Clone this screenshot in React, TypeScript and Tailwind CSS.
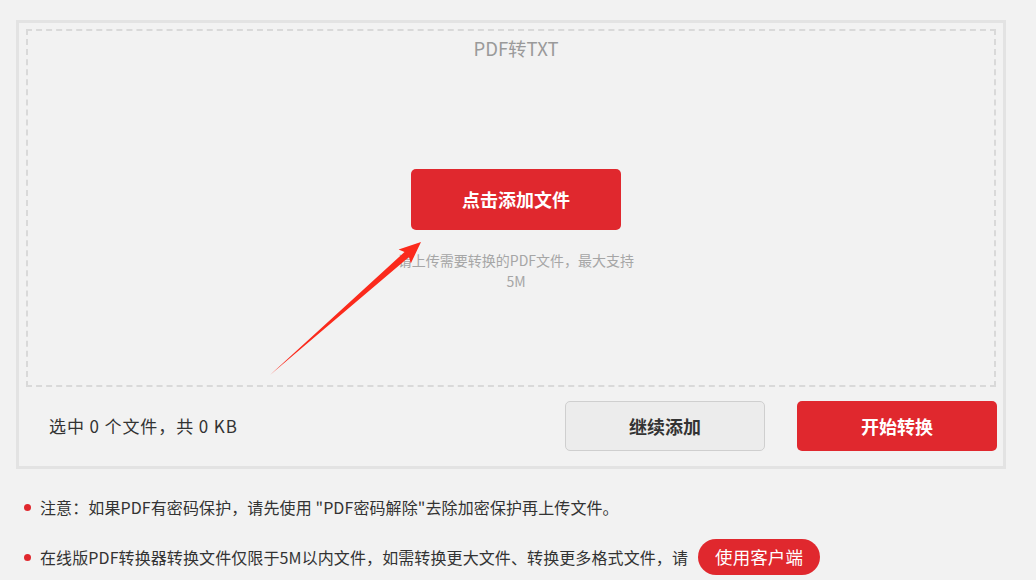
import React from "react";

const font = { fontFamily: '"Noto Sans CJK SC", "Noto Sans", sans-serif' };

export default function App() {
  return (
    <div
      className="relative min-h-[580px] w-[1036px] bg-[#f2f2f2] pt-[20px] pl-[16px] overflow-hidden"
      style={font}
    >
      <div className="w-[990px] border-[3px] border-[#e3e3e3] px-[7px] pt-[6px] pb-[15px]">
        <div className="h-[358px] border-2 border-dashed border-[#d9d9d9] pl-[10px] flex flex-col items-center">
          <div className="mt-[5px] text-[18.5px] leading-[24px] text-[#9a9a9a]">PDF转TXT</div>
          <button className="mt-[109px] w-[210px] h-[61px] rounded-[5px] bg-[#e0282e] text-white text-[18px] font-bold">
            点击添加文件
          </button>
          <div className="mt-[20px] w-[244px] text-center text-[14px] leading-[21px] text-[#a6a6a6]">
            请上传需要转换的PDF文件，最大支持5M
          </div>
        </div>
        <div className="mt-[14px] h-[50px] flex items-center">
          <div className="ml-[23px] text-[17px] tracking-[0.9px] text-[#333]">选中 0 个文件，共 0 KB</div>
          <button className="ml-auto w-[200px] h-[50px] rounded-[5px] border border-[#cfcfcf] bg-[#ececec] text-[18px] font-bold text-[#333]">
            继续添加
          </button>
          <button className="ml-[32px] mr-[-1px] w-[200px] h-[50px] rounded-[5px] bg-[#e0282e] text-[18px] font-bold text-white">
            开始转换
          </button>
        </div>
      </div>
      <ul className="mt-[26px] flex flex-col gap-[26px]">
        <li className="flex items-center h-[24px] text-[16px] tracking-[0.1px] text-[#333]">
          <span className="ml-[8px] mr-[9px] w-[7px] h-[7px] rounded-full bg-[#e0282e]" />
          注意：如果PDF有密码保护，请先使用 "PDF密码解除"去除加密保护再上传文件。
        </li>
        <li className="flex items-center h-[24px] text-[16px] tracking-[0.1px] text-[#333]">
          <span className="ml-[8px] mr-[9px] w-[7px] h-[7px] rounded-full bg-[#e0282e]" />
          在线版PDF转换器转换文件仅限于5M以内文件，如需转换更大文件、转换更多格式文件，请
          <span className="ml-[10px] h-[36px] px-[17px] rounded-full bg-[#e0282e] text-white text-[17.5px] flex items-center">
            使用客户端
          </span>
        </li>
      </ul>
      <svg
        className="absolute left-0 top-0 pointer-events-none"
        width="1036"
        height="580"
        viewBox="0 0 1036 580"
      >
        <polygon
          points="270,375 404.5,252 398.6,249.5 421,242 410.8,263.5 409,257"
          fill="#fb2a1c"
        />
      </svg>
    </div>
  );
}
